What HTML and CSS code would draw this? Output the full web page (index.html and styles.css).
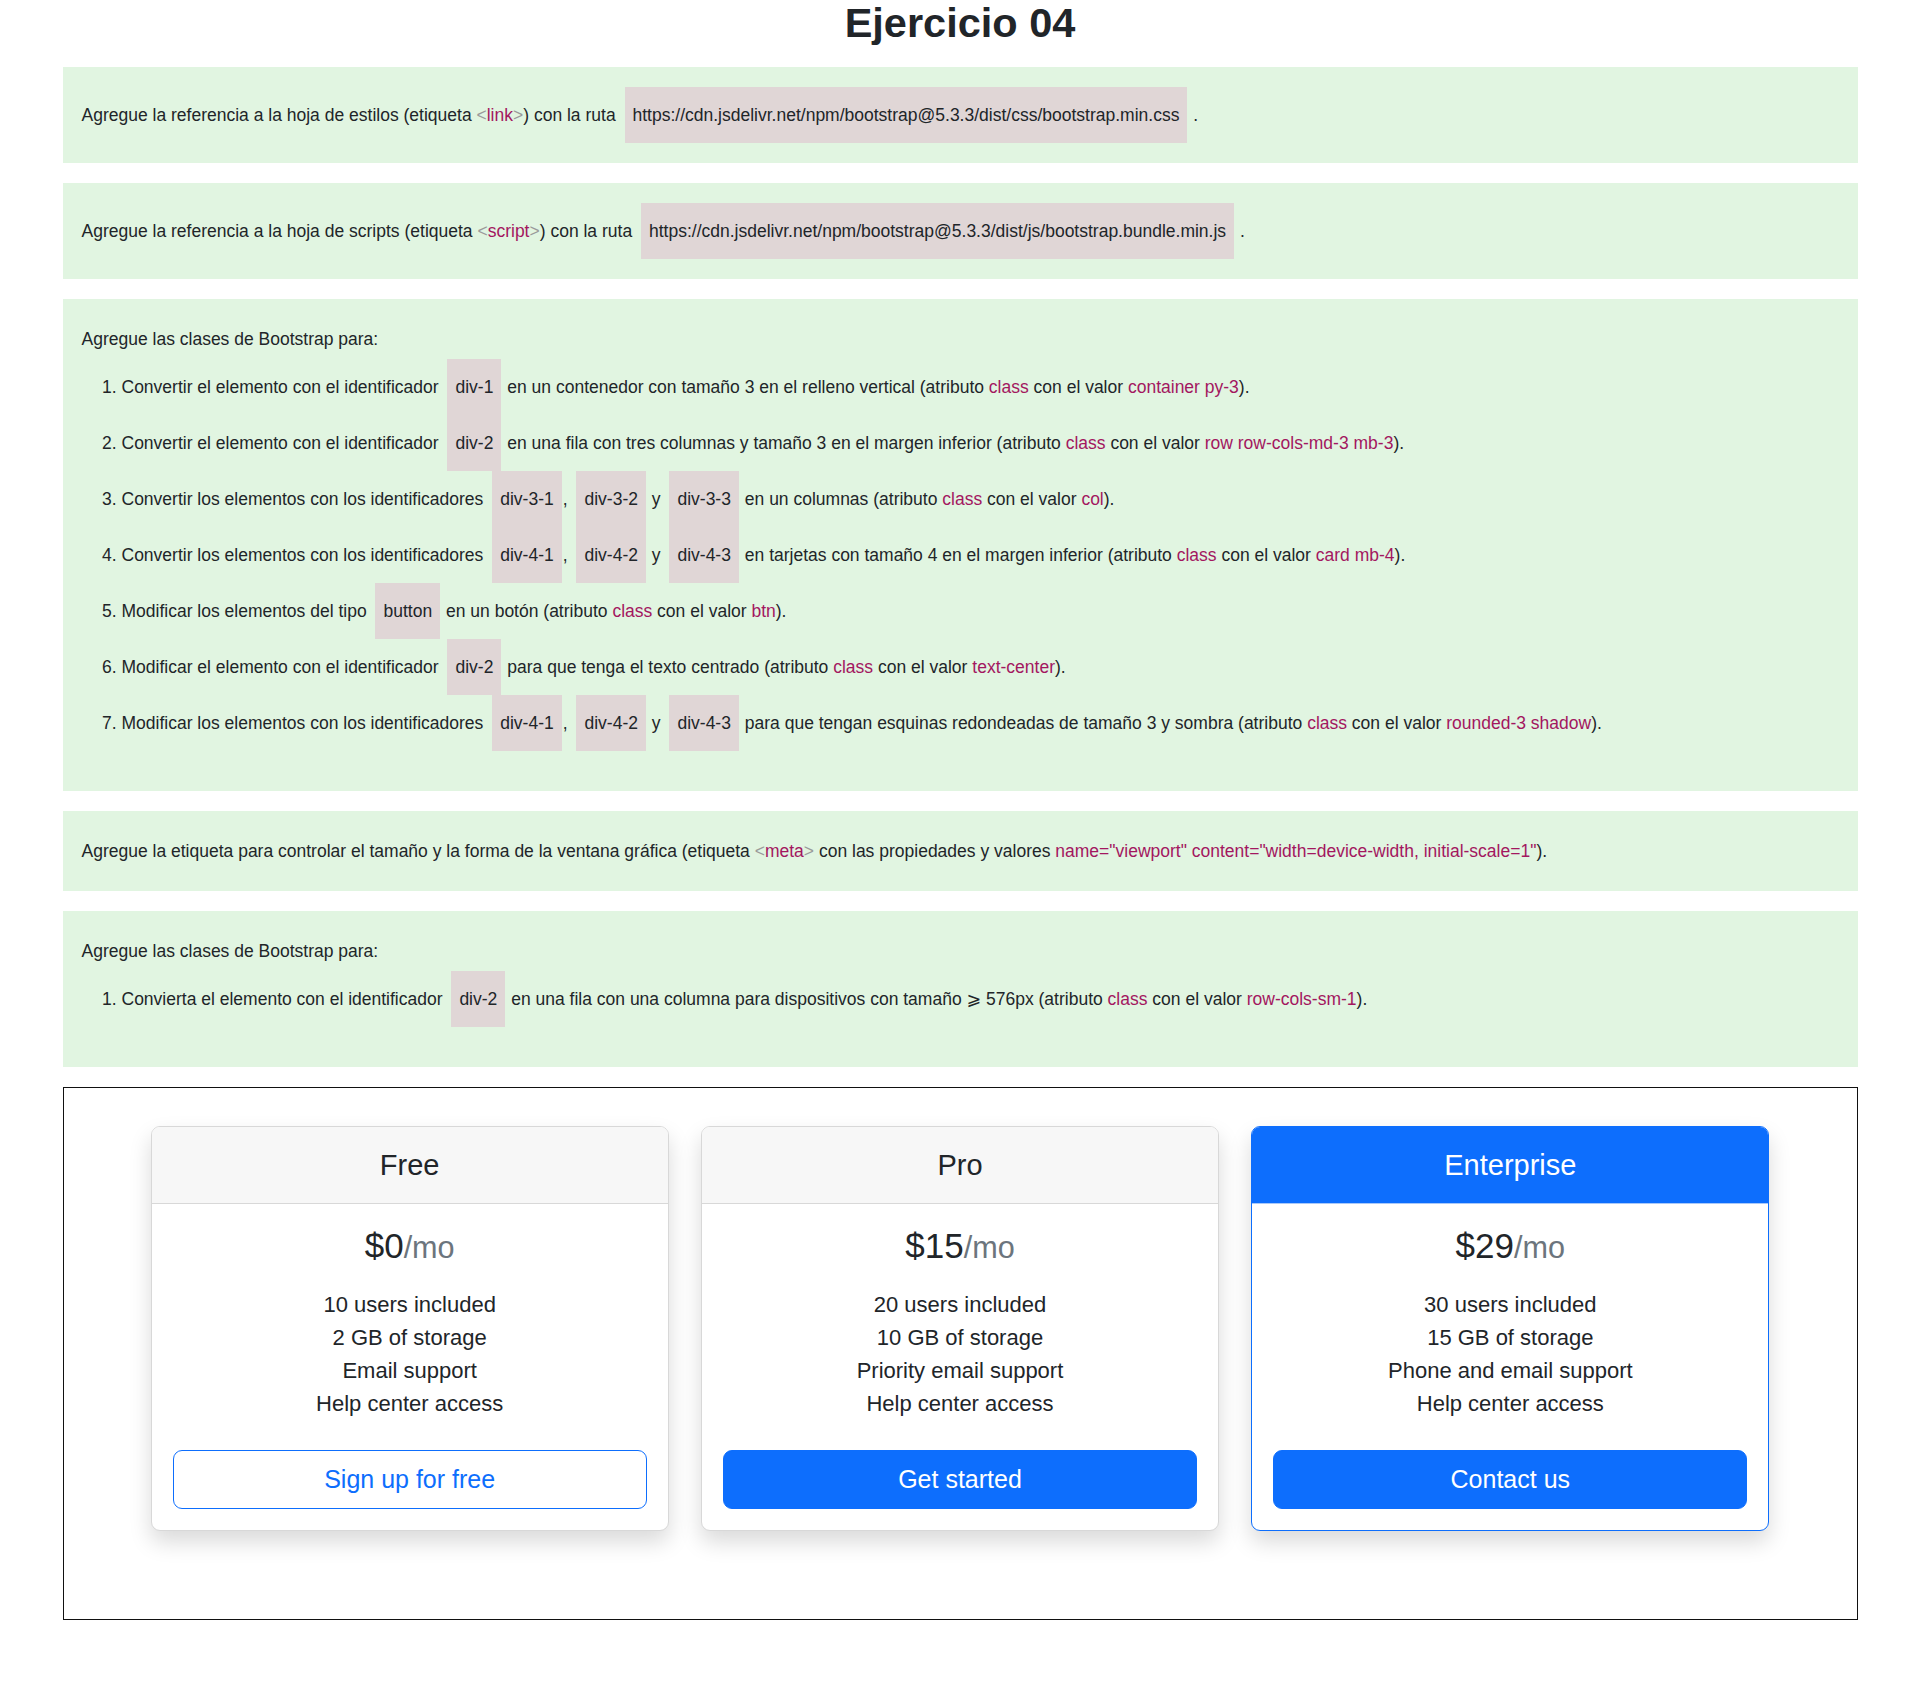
FILE: index.html
```html
<!DOCTYPE html>
<html lang="es">
<head>
<meta charset="utf-8">
<title>Ejercicio 04</title>
<link rel="stylesheet" href="styles.css">
</head>
<body>
<h1 class="title">Ejercicio 04</h1>
<main class="page">
  <section class="task">
    <p class="line">Agregue la referencia a la hoja de estilos (etiqueta <span class="br">&lt;</span><span class="kw">link</span><span class="br">&gt;</span>) con la ruta <code class="code">https://cdn.jsdelivr.net/npm/bootstrap@5.3.3/dist/css/bootstrap.min.css</code> .</p>
  </section>
  <section class="task">
    <p class="line">Agregue la referencia a la hoja de scripts (etiqueta <span class="br">&lt;</span><span class="kw">script</span><span class="br">&gt;</span>) con la ruta <code class="code">https://cdn.jsdelivr.net/npm/bootstrap@5.3.3/dist/js/bootstrap.bundle.min.js</code> .</p>
  </section>
  <section class="task">
    <p class="line">Agregue las clases de Bootstrap para:</p>
    <ol class="steps">
      <li>Convertir el elemento con el identificador <code class="code">div-1</code> en un contenedor con tamaño 3 en el relleno vertical (atributo <span class="kw">class</span> con el valor <span class="kw">container py-3</span>).</li>
      <li>Convertir el elemento con el identificador <code class="code">div-2</code> en una fila con tres columnas y tamaño 3 en el margen inferior (atributo <span class="kw">class</span> con el valor <span class="kw">row row-cols-md-3 mb-3</span>).</li>
      <li>Convertir los elementos con los identificadores <code class="code">div-3-1</code>, <code class="code">div-3-2</code> y <code class="code">div-3-3</code> en un columnas (atributo <span class="kw">class</span> con el valor <span class="kw">col</span>).</li>
      <li>Convertir los elementos con los identificadores <code class="code">div-4-1</code>, <code class="code">div-4-2</code> y <code class="code">div-4-3</code> en tarjetas con tamaño 4 en el margen inferior (atributo <span class="kw">class</span> con el valor <span class="kw">card mb-4</span>).</li>
      <li>Modificar los elementos del tipo <code class="code">button</code> en un botón (atributo <span class="kw">class</span> con el valor <span class="kw">btn</span>).</li>
      <li>Modificar el elemento con el identificador <code class="code">div-2</code> para que tenga el texto centrado (atributo <span class="kw">class</span> con el valor <span class="kw">text-center</span>).</li>
      <li>Modificar los elementos con los identificadores <code class="code">div-4-1</code>, <code class="code">div-4-2</code> y <code class="code">div-4-3</code> para que tengan esquinas redondeadas de tamaño 3 y sombra (atributo <span class="kw">class</span> con el valor <span class="kw">rounded-3 shadow</span>).</li>
    </ol>
  </section>
  <section class="task">
    <p class="line">Agregue la etiqueta para controlar el tamaño y la forma de la ventana gráfica (etiqueta <span class="br">&lt;</span><span class="kw">meta</span><span class="br">&gt;</span> con las propiedades y valores <span class="kw">name="viewport" content="width=device-width, initial-scale=1"</span>).</p>
  </section>
  <section class="task">
    <p class="line">Agregue las clases de Bootstrap para:</p>
    <ol class="steps">
      <li>Convierta el elemento con el identificador <code class="code">div-2</code> en una fila con una columna para dispositivos con tamaño ⩾ 576px (atributo <span class="kw">class</span> con el valor <span class="kw">row-cols-sm-1</span>).</li>
    </ol>
  </section>

  <section class="demo">
    <div class="cards">
      <div class="card">
        <div class="card-head"><h4 class="plan">Free</h4></div>
        <div class="card-body">
          <h2 class="price">$0<small class="per">/mo</small></h2>
          <ul class="features">
            <li>10 users included</li>
            <li>2 GB of storage</li>
            <li>Email support</li>
            <li>Help center access</li>
          </ul>
          <button class="btn btn-outline" type="button">Sign up for free</button>
        </div>
      </div>
      <div class="card">
        <div class="card-head"><h4 class="plan">Pro</h4></div>
        <div class="card-body">
          <h2 class="price">$15<small class="per">/mo</small></h2>
          <ul class="features">
            <li>20 users included</li>
            <li>10 GB of storage</li>
            <li>Priority email support</li>
            <li>Help center access</li>
          </ul>
          <button class="btn btn-primary" type="button">Get started</button>
        </div>
      </div>
      <div class="card card-primary">
        <div class="card-head"><h4 class="plan">Enterprise</h4></div>
        <div class="card-body">
          <h2 class="price">$29<small class="per">/mo</small></h2>
          <ul class="features">
            <li>30 users included</li>
            <li>15 GB of storage</li>
            <li>Phone and email support</li>
            <li>Help center access</li>
          </ul>
          <button class="btn btn-primary" type="button">Contact us</button>
        </div>
      </div>
    </div>
  </section>
</main>
</body>
</html>
```
FILE: styles.css
```css
* { box-sizing: border-box; }

html, body {
  margin: 0;
  padding: 0;
  background: #ffffff;
}

body {
  font-family: "Liberation Sans", Arial, "DejaVu Sans", sans-serif;
  color: #212529;
  font-size: 16px;
}

.title {
  margin: 0 0 22px;
  font-size: 41.5px;
  line-height: 45px;
  font-weight: 700;
  text-align: center;
  color: #212529;
}

.page {
  width: 1795px;
  margin: 0 auto;
  padding-bottom: 62px;
}

.task {
  background: #e1f5e1;
  padding: 20px 19px;
  margin-bottom: 20px;
  font-size: 17.5px;
  line-height: 40px;
}

.line {
  margin: 0;
}

.kw { color: #a3175f; }
.br { color: #9a9a9a; }

.code {
  display: inline-block;
  font-family: "Liberation Sans", Arial, sans-serif;
  font-size: 17.5px;
  line-height: 40px;
  padding: 8px 8px;
  margin: 0 1px 0 4px;
  background: #e0d6d6;
  color: #212529;
}

.steps {
  margin: 0 0 20px;
  padding-left: 40px;
}

.steps li {
  line-height: 40px;
}

/* demo pricing area */
.demo {
  border: 1px solid #111;
  padding: 38px 0 88px;
}

.cards {
  width: 1619px;
  margin: 0 auto;
  display: grid;
  grid-template-columns: repeat(3, 1fr);
  gap: 32px;
}

.card {
  border: 1px solid #d8d8d8;
  border-radius: 9px;
  background: #fff;
  box-shadow: 0 11px 22px rgba(0, 0, 0, 0.15);
  text-align: center;
  overflow: hidden;
}

.card-head {
  background: #f7f7f7;
  border-bottom: 1px solid #d8d8d8;
  padding: 20.5px 16px;
}

.plan {
  margin: 0;
  font-size: 29px;
  line-height: 35px;
  font-weight: 400;
}

.card-primary {
  border-color: #0d6efd;
}

.card-primary .card-head {
  background: #0d6efd;
  color: #fff;
  border-bottom-color: #a9c9f9;
}

.card-body {
  padding: 21px;
}

.price {
  margin: 0 0 20px;
  font-size: 35px;
  line-height: 42px;
  font-weight: 400;
}

.per {
  font-size: 30.6px;
  color: #6c757d;
  font-weight: 300;
}

.features {
  list-style: none;
  margin: 0 0 30px;
  padding: 0;
  font-size: 22px;
  line-height: 33px;
}

.btn {
  display: block;
  width: 100%;
  font-family: "Liberation Sans", Arial, sans-serif;
  font-size: 25px;
  line-height: 37px;
  padding: 10px 16px;
  border: 1px solid #0d6efd;
  border-radius: 9px;
  cursor: pointer;
}

.btn-outline {
  background: #fff;
  color: #0d6efd;
}

.btn-primary {
  background: #0d6efd;
  color: #fff;
}
```
